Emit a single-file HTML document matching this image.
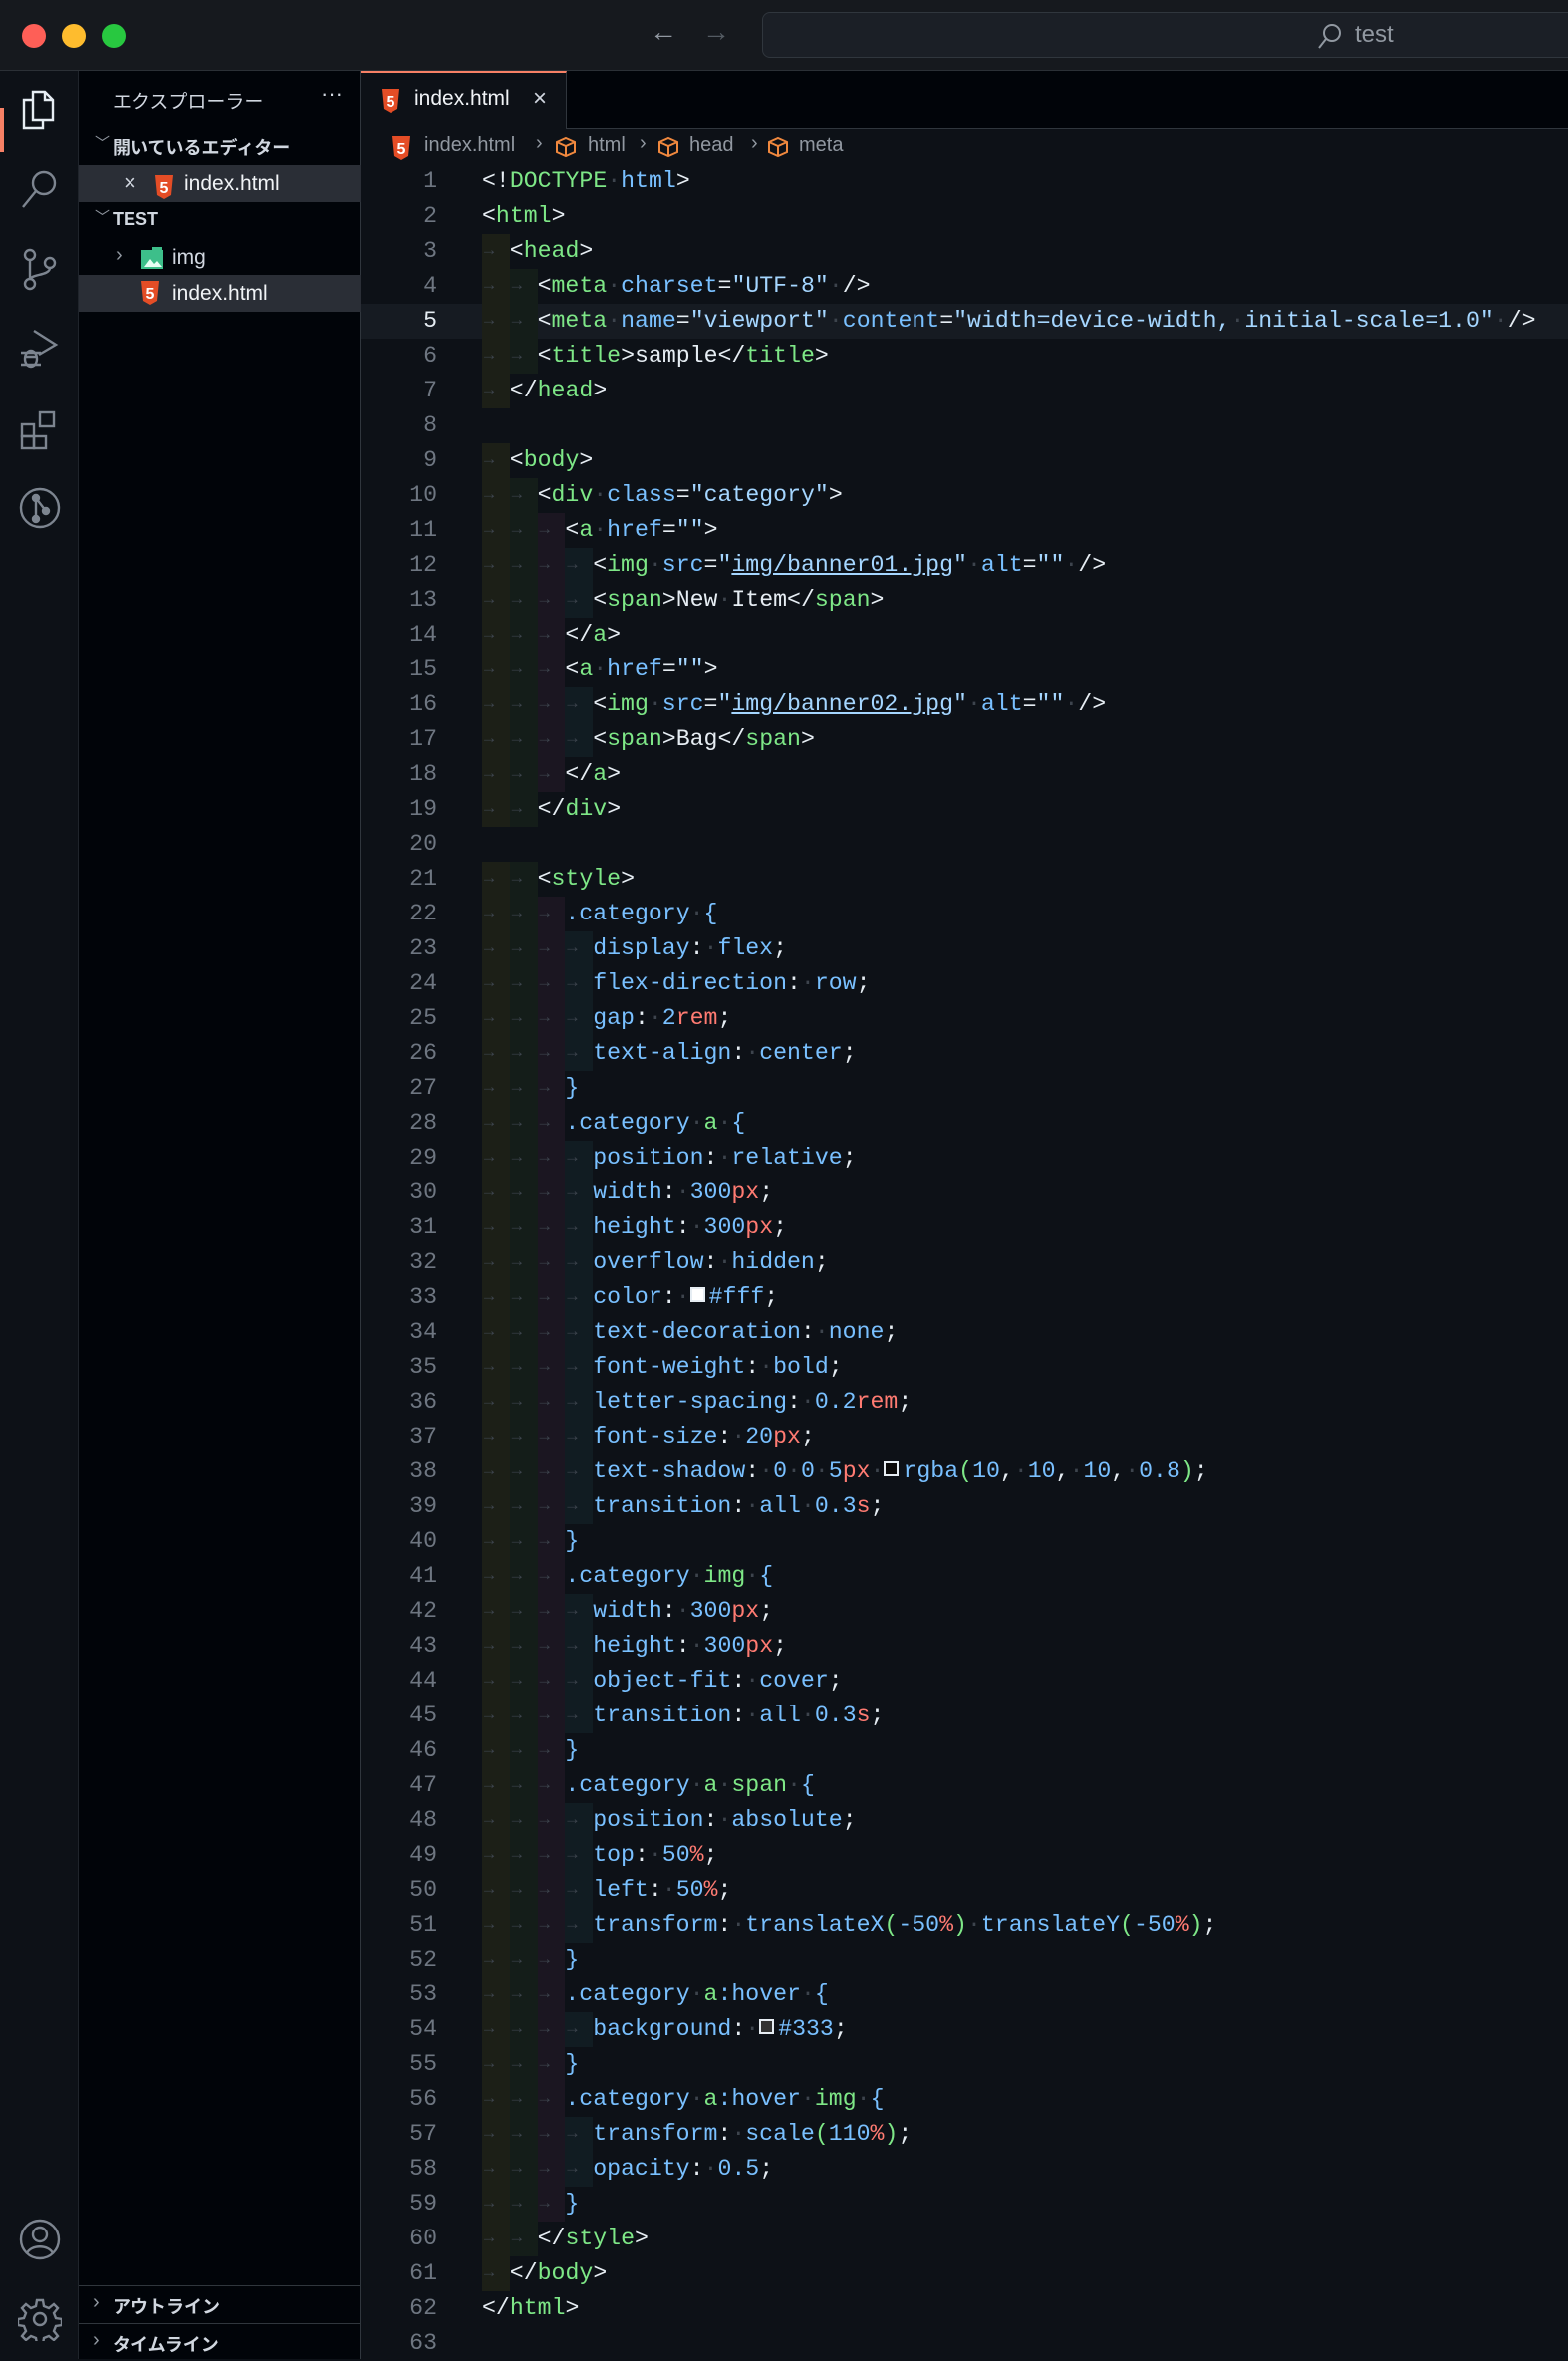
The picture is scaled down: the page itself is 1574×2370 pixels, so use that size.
<!DOCTYPE html>
<html><head><meta charset="utf-8">
<style>
*{margin:0;padding:0;box-sizing:border-box}
body{width:1574px;height:2368px;background:#0d1117;overflow:hidden;position:relative;font-family:"Liberation Sans","Noto Sans CJK JP",sans-serif;color:#e6edf3}
.abs{position:absolute}
#title{left:0;top:0;width:1574px;height:71px;background:#16191e;border-bottom:1px solid #2b3036}
.dot{position:absolute;top:24px;width:24px;height:24px;border-radius:50%}
#search{left:765px;top:12px;width:830px;height:46px;border:1px solid #30363d;border-radius:8px;background:#1b1f26}
#act{left:0;top:71px;width:79px;height:2297px;background:#0d1117;border-right:1px solid #1f242b}
#side{left:79px;top:71px;width:283px;height:2297px;background:#010409;border-right:1px solid #30363d;font-size:20px;color:#d1d7e0}
#tabbar{left:362px;top:71px;width:1212px;height:58px;background:#010409;border-bottom:1px solid #30363d}
#tab{left:362px;top:71px;width:207px;height:58px;background:#0d1117;border-top:2px solid #f78166;border-right:1px solid #30363d}
#crumb{left:362px;top:130px;height:35px;font-size:20px;color:#9198a1}
#code{left:362px;top:165px;font-family:"Liberation Mono",monospace;font-size:23.2px;line-height:35px}
.r{height:35px;display:flex;white-space:pre;overflow:hidden}
.n{width:77px;text-align:right;color:#6e7681;margin-right:45px;flex:none}
.hl{background:#161b22;width:1212px}
.hl .n{color:#e6edf3}
g{color:#7ee787}c{color:#79c0ff}v{color:#a5d6ff}r{color:#ff7b72}
d{color:#3d444d}
k{color:#a5d6ff;text-decoration:underline}
i1,i2,i3,i4{display:inline-block;width:27.8px;height:35px;vertical-align:top;color:#3d444d;font-style:normal;font-size:17px;text-indent:2px}
i1{background:#1c1f17}i2{background:#141d19}i3{background:#1b1621}i4{background:#111c22}
.sw{display:inline-block;width:15px;height:15px;border:2px solid #e6edf3;margin-right:4px;vertical-align:1px}
.row{position:absolute;left:0;width:283px;height:37px}
.t{position:absolute;white-space:nowrap}
</style></head><body>
<div id="title" class="abs">
<div class="dot" style="left:22px;background:#fe5f57"></div>
<div class="dot" style="left:62px;background:#febc2e"></div>
<div class="dot" style="left:102px;background:#28c840"></div>
<div class="t" style="left:652px;top:16px;font-size:28px;color:#9198a1">←</div>
<div class="t" style="left:705px;top:16px;font-size:28px;color:#545b63">→</div>
</div>
<div id="search" class="abs">
<svg class="abs" style="left:555px;top:8px" width="28" height="30" viewBox="0 0 28 30"><circle cx="16" cy="12" r="8" fill="none" stroke="#9198a1" stroke-width="2"/><line x1="10" y1="18" x2="3" y2="27" stroke="#9198a1" stroke-width="2"/></svg>
<div class="t" style="left:594px;top:8px;font-size:24px;color:#9198a1">test</div>
</div>

<div id="act" class="abs">
<div class="abs" style="left:0;top:37px;width:4px;height:45px;background:#f78166"></div>
<svg class="abs" style="left:18px;top:15px" width="44" height="50" fill="none" stroke-width="2.4">
<g stroke="#e6edf3"><path d="M15 6h12l8 8v20H15z M27 6v8h8"/><path d="M15 14H6v28h19v-8"/></g>
</svg>
<svg class="abs" style="left:18px;top:97px" width="44" height="44" fill="none" stroke="#7d8590" stroke-width="2.4"><circle cx="26" cy="16" r="11"/><line x1="18" y1="24" x2="5" y2="40"/></svg>
<svg class="abs" style="left:18px;top:177px" width="44" height="44" fill="none" stroke="#7d8590" stroke-width="2.4"><circle cx="12" cy="8" r="5"/><circle cx="12" cy="37" r="5"/><circle cx="32" cy="16" r="5"/><path d="M12 13v19M32 21c0 8-20 6-20 12"/></svg>
<svg class="abs" style="left:18px;top:257px" width="44" height="44" fill="none" stroke="#7d8590" stroke-width="2.4"><path d="M16 4l22 14-17 10"/><ellipse cx="13" cy="32" rx="6" ry="8"/><path d="M3 26h20M3 38h20M7 30h12"/></svg>
<svg class="abs" style="left:18px;top:339px" width="44" height="44" fill="none" stroke="#7d8590" stroke-width="2.4"><rect x="4" y="16" width="12" height="12"/><rect x="4" y="28" width="12" height="12"/><rect x="16" y="28" width="12" height="12"/><rect x="22" y="4" width="14" height="14"/></svg>
<svg class="abs" style="left:18px;top:417px" width="44" height="44" fill="none" stroke="#7d8590" stroke-width="2.4"><circle cx="22" cy="22" r="19"/><circle cx="18" cy="12" r="3" fill="#7d8590"/><circle cx="18" cy="33" r="3" fill="#7d8590"/><circle cx="28" cy="25" r="3" fill="#7d8590"/><path d="M18 12v21M18 12l10 13"/></svg>
<svg class="abs" style="left:18px;top:2155px" width="44" height="44" fill="none" stroke="#7d8590" stroke-width="2.4"><circle cx="22" cy="22" r="19"/><circle cx="22" cy="17" r="7"/><path d="M9 36c4-9 22-9 26 0"/></svg>
<svg class="abs" style="left:18px;top:2235px" width="44" height="44" fill="none" stroke="#7d8590" stroke-width="2.4"><circle cx="22" cy="22" r="6"/><path d="M19 3h6l1 6 5 2 5-4 4 4-4 5 2 5 6 1v6l-6 1-2 5 4 5-4 4-5-4-5 2-1 6h-6l-1-6-5-2-5 4-4-4 4-5-2-5-6-1v-6l6-1 2-5-4-5 4-4 5 4 5-2z"/></svg>
</div>

<div id="side" class="abs">
<div class="t" style="left:34px;top:16px;font-size:19px;color:#d1d7e0">エクスプローラー</div>
<div class="t" style="left:243px;top:10px;font-size:22px;color:#d1d7e0">···</div>
<div class="t" style="left:16px;top:62px;font-size:15px;color:#9198a1">﹀</div>
<div class="t" style="left:34px;top:64px;font-size:18px;font-weight:bold">開いているエディター</div>
<div class="row" style="top:95px;background:#2a2e36"></div>
<div class="t" style="left:45px;top:100px;font-size:22px;color:#d1d7e0">×</div>
<svg class="abs" style="left:76px;top:104px" width="20" height="26" viewBox="0 0 20 26"><path d="M1 1h18l-2 20-7 4-7-4z" fill="#e44d26"/><text x="10" y="19" font-size="16" font-weight="bold" text-anchor="middle" fill="#fff" font-family="Liberation Sans">5</text></svg>
<div class="t" style="left:106px;top:102px;font-size:21px;color:#f0f3f6">index.html</div>
<div class="t" style="left:16px;top:136px;font-size:15px;color:#9198a1">﹀</div>
<div class="t" style="left:34px;top:139px;font-size:18px;font-weight:bold">TEST</div>
<div class="t" style="left:37px;top:174px;font-size:20px;color:#9198a1">›</div>
<svg class="abs" style="left:62px;top:176px" width="24" height="24"><rect x="1" y="4" width="22" height="19" fill="#3dbf8a"/><rect x="12" y="1" width="10" height="5" fill="#3dbf8a"/><path d="M4 21l6-8 4 5 3-3 5 6z" fill="#e6fff3"/></svg>
<div class="t" style="left:94px;top:176px;font-size:21px">img</div>
<div class="row" style="top:205px;background:#2a2e36"></div>
<svg class="abs" style="left:62px;top:210px" width="20" height="26" viewBox="0 0 20 26"><path d="M1 1h18l-2 20-7 4-7-4z" fill="#e44d26"/><text x="10" y="19" font-size="16" font-weight="bold" text-anchor="middle" fill="#fff" font-family="Liberation Sans">5</text></svg>
<div class="t" style="left:94px;top:212px;font-size:21px;color:#f0f3f6">index.html</div>
<div class="abs" style="left:0;top:2223px;width:283px;height:1px;background:#30363d"></div>
<div class="t" style="left:14px;top:2229px;font-size:20px;color:#9198a1">›</div>
<div class="t" style="left:34px;top:2231px;font-size:18px;font-weight:bold">アウトライン</div>
<div class="abs" style="left:0;top:2261px;width:283px;height:1px;background:#30363d"></div>
<div class="t" style="left:14px;top:2267px;font-size:20px;color:#9198a1">›</div>
<div class="t" style="left:34px;top:2269px;font-size:18px;font-weight:bold">タイムライン</div>
</div>

<div id="tabbar" class="abs"></div>
<div id="tab" class="abs">
<svg class="abs" style="left:20px;top:15px" width="20" height="26" viewBox="0 0 20 26"><path d="M1 1h18l-2 20-7 4-7-4z" fill="#e44d26"/><text x="10" y="19" font-size="16" font-weight="bold" text-anchor="middle" fill="#fff" font-family="Liberation Sans">5</text></svg>
<div class="t" style="left:54px;top:14px;font-size:21px;color:#f0f3f6">index.html</div>
<div class="t" style="left:173px;top:12px;font-size:24px;color:#d1d7e0">×</div>
</div>
<div id="crumb" class="abs">
<svg class="abs" style="left:31px;top:6px" width="20" height="26" viewBox="0 0 20 26"><path d="M1 1h18l-2 20-7 4-7-4z" fill="#e44d26"/><text x="10" y="19" font-size="16" font-weight="bold" text-anchor="middle" fill="#fff" font-family="Liberation Sans">5</text></svg>
<div class="t" style="left:64px;top:5px">index.html</div>
<div class="t" style="left:176px;top:3px">›</div>
<svg class="abs" style="left:195px;top:7px" width="22" height="22" fill="none" stroke="#f0883e" stroke-width="2"><path d="M11 2l9 4v10l-9 4-9-4V6zM2 6l9 4 9-4M11 10v10"/></svg>
<div class="t" style="left:228px;top:5px">html</div>
<div class="t" style="left:280px;top:3px">›</div>
<svg class="abs" style="left:298px;top:7px" width="22" height="22" fill="none" stroke="#f0883e" stroke-width="2"><path d="M11 2l9 4v10l-9 4-9-4V6zM2 6l9 4 9-4M11 10v10"/></svg>
<div class="t" style="left:330px;top:5px">head</div>
<div class="t" style="left:392px;top:3px">›</div>
<svg class="abs" style="left:408px;top:7px" width="22" height="22" fill="none" stroke="#f0883e" stroke-width="2"><path d="M11 2l9 4v10l-9 4-9-4V6zM2 6l9 4 9-4M11 10v10"/></svg>
<div class="t" style="left:440px;top:5px">meta</div>
</div>

<div id="code" class="abs"><div class="r"><span class="n">1</span><span>&lt;!<g>DOCTYPE</g><d>·</d><c>html</c>&gt;</span></div><div class="r"><span class="n">2</span><span>&lt;<g>html</g>&gt;</span></div><div class="r"><span class="n">3</span><span><i1>→</i1>&lt;<g>head</g>&gt;</span></div><div class="r"><span class="n">4</span><span><i1>→</i1><i2>→</i2>&lt;<g>meta</g><d>·</d><c>charset</c>=<v>"UTF-8"</v><d>·</d>/&gt;</span></div><div class="r hl"><span class="n">5</span><span><i1>→</i1><i2>→</i2>&lt;<g>meta</g><d>·</d><c>name</c>=<v>"viewport"</v><d>·</d><c>content</c>=<v>"width=device-width,<d>·</d>initial-scale=1.0"</v><d>·</d>/&gt;</span></div><div class="r"><span class="n">6</span><span><i1>→</i1><i2>→</i2>&lt;<g>title</g>&gt;sample&lt;/<g>title</g>&gt;</span></div><div class="r"><span class="n">7</span><span><i1>→</i1>&lt;/<g>head</g>&gt;</span></div><div class="r"><span class="n">8</span><span></span></div><div class="r"><span class="n">9</span><span><i1>→</i1>&lt;<g>body</g>&gt;</span></div><div class="r"><span class="n">10</span><span><i1>→</i1><i2>→</i2>&lt;<g>div</g><d>·</d><c>class</c>=<v>"category"</v>&gt;</span></div><div class="r"><span class="n">11</span><span><i1>→</i1><i2>→</i2><i3>→</i3>&lt;<g>a</g><d>·</d><c>href</c>=<v>""</v>&gt;</span></div><div class="r"><span class="n">12</span><span><i1>→</i1><i2>→</i2><i3>→</i3><i4>→</i4>&lt;<g>img</g><d>·</d><c>src</c>=<v>"<k>img/banner01.jpg</k>"</v><d>·</d><c>alt</c>=<v>""</v><d>·</d>/&gt;</span></div><div class="r"><span class="n">13</span><span><i1>→</i1><i2>→</i2><i3>→</i3><i4>→</i4>&lt;<g>span</g>&gt;New<d>·</d>Item&lt;/<g>span</g>&gt;</span></div><div class="r"><span class="n">14</span><span><i1>→</i1><i2>→</i2><i3>→</i3>&lt;/<g>a</g>&gt;</span></div><div class="r"><span class="n">15</span><span><i1>→</i1><i2>→</i2><i3>→</i3>&lt;<g>a</g><d>·</d><c>href</c>=<v>""</v>&gt;</span></div><div class="r"><span class="n">16</span><span><i1>→</i1><i2>→</i2><i3>→</i3><i4>→</i4>&lt;<g>img</g><d>·</d><c>src</c>=<v>"<k>img/banner02.jpg</k>"</v><d>·</d><c>alt</c>=<v>""</v><d>·</d>/&gt;</span></div><div class="r"><span class="n">17</span><span><i1>→</i1><i2>→</i2><i3>→</i3><i4>→</i4>&lt;<g>span</g>&gt;Bag&lt;/<g>span</g>&gt;</span></div><div class="r"><span class="n">18</span><span><i1>→</i1><i2>→</i2><i3>→</i3>&lt;/<g>a</g>&gt;</span></div><div class="r"><span class="n">19</span><span><i1>→</i1><i2>→</i2>&lt;/<g>div</g>&gt;</span></div><div class="r"><span class="n">20</span><span></span></div><div class="r"><span class="n">21</span><span><i1>→</i1><i2>→</i2>&lt;<g>style</g>&gt;</span></div><div class="r"><span class="n">22</span><span><i1>→</i1><i2>→</i2><i3>→</i3><c>.category</c><d>·</d><c>{</c></span></div><div class="r"><span class="n">23</span><span><i1>→</i1><i2>→</i2><i3>→</i3><i4>→</i4><c>display</c>:<d>·</d><c>flex</c>;</span></div><div class="r"><span class="n">24</span><span><i1>→</i1><i2>→</i2><i3>→</i3><i4>→</i4><c>flex-direction</c>:<d>·</d><c>row</c>;</span></div><div class="r"><span class="n">25</span><span><i1>→</i1><i2>→</i2><i3>→</i3><i4>→</i4><c>gap</c>:<d>·</d><c>2</c><r>rem</r>;</span></div><div class="r"><span class="n">26</span><span><i1>→</i1><i2>→</i2><i3>→</i3><i4>→</i4><c>text-align</c>:<d>·</d><c>center</c>;</span></div><div class="r"><span class="n">27</span><span><i1>→</i1><i2>→</i2><i3>→</i3><c>}</c></span></div><div class="r"><span class="n">28</span><span><i1>→</i1><i2>→</i2><i3>→</i3><c>.category</c><d>·</d><g>a</g><d>·</d><c>{</c></span></div><div class="r"><span class="n">29</span><span><i1>→</i1><i2>→</i2><i3>→</i3><i4>→</i4><c>position</c>:<d>·</d><c>relative</c>;</span></div><div class="r"><span class="n">30</span><span><i1>→</i1><i2>→</i2><i3>→</i3><i4>→</i4><c>width</c>:<d>·</d><c>300</c><r>px</r>;</span></div><div class="r"><span class="n">31</span><span><i1>→</i1><i2>→</i2><i3>→</i3><i4>→</i4><c>height</c>:<d>·</d><c>300</c><r>px</r>;</span></div><div class="r"><span class="n">32</span><span><i1>→</i1><i2>→</i2><i3>→</i3><i4>→</i4><c>overflow</c>:<d>·</d><c>hidden</c>;</span></div><div class="r"><span class="n">33</span><span><i1>→</i1><i2>→</i2><i3>→</i3><i4>→</i4><c>color</c>:<d>·</d><span class="sw" style="background:#fff"></span><c>#fff</c>;</span></div><div class="r"><span class="n">34</span><span><i1>→</i1><i2>→</i2><i3>→</i3><i4>→</i4><c>text-decoration</c>:<d>·</d><c>none</c>;</span></div><div class="r"><span class="n">35</span><span><i1>→</i1><i2>→</i2><i3>→</i3><i4>→</i4><c>font-weight</c>:<d>·</d><c>bold</c>;</span></div><div class="r"><span class="n">36</span><span><i1>→</i1><i2>→</i2><i3>→</i3><i4>→</i4><c>letter-spacing</c>:<d>·</d><c>0.2</c><r>rem</r>;</span></div><div class="r"><span class="n">37</span><span><i1>→</i1><i2>→</i2><i3>→</i3><i4>→</i4><c>font-size</c>:<d>·</d><c>20</c><r>px</r>;</span></div><div class="r"><span class="n">38</span><span><i1>→</i1><i2>→</i2><i3>→</i3><i4>→</i4><c>text-shadow</c>:<d>·</d><c>0</c><d>·</d><c>0</c><d>·</d><c>5</c><r>px</r><d>·</d><span class="sw" style="background:#0a0a0a"></span><c>rgba</c><g>(</g><c>10</c>,<d>·</d><c>10</c>,<d>·</d><c>10</c>,<d>·</d><c>0.8</c><g>)</g>;</span></div><div class="r"><span class="n">39</span><span><i1>→</i1><i2>→</i2><i3>→</i3><i4>→</i4><c>transition</c>:<d>·</d><c>all</c><d>·</d><c>0.3</c><r>s</r>;</span></div><div class="r"><span class="n">40</span><span><i1>→</i1><i2>→</i2><i3>→</i3><c>}</c></span></div><div class="r"><span class="n">41</span><span><i1>→</i1><i2>→</i2><i3>→</i3><c>.category</c><d>·</d><g>img</g><d>·</d><c>{</c></span></div><div class="r"><span class="n">42</span><span><i1>→</i1><i2>→</i2><i3>→</i3><i4>→</i4><c>width</c>:<d>·</d><c>300</c><r>px</r>;</span></div><div class="r"><span class="n">43</span><span><i1>→</i1><i2>→</i2><i3>→</i3><i4>→</i4><c>height</c>:<d>·</d><c>300</c><r>px</r>;</span></div><div class="r"><span class="n">44</span><span><i1>→</i1><i2>→</i2><i3>→</i3><i4>→</i4><c>object-fit</c>:<d>·</d><c>cover</c>;</span></div><div class="r"><span class="n">45</span><span><i1>→</i1><i2>→</i2><i3>→</i3><i4>→</i4><c>transition</c>:<d>·</d><c>all</c><d>·</d><c>0.3</c><r>s</r>;</span></div><div class="r"><span class="n">46</span><span><i1>→</i1><i2>→</i2><i3>→</i3><c>}</c></span></div><div class="r"><span class="n">47</span><span><i1>→</i1><i2>→</i2><i3>→</i3><c>.category</c><d>·</d><g>a</g><d>·</d><g>span</g><d>·</d><c>{</c></span></div><div class="r"><span class="n">48</span><span><i1>→</i1><i2>→</i2><i3>→</i3><i4>→</i4><c>position</c>:<d>·</d><c>absolute</c>;</span></div><div class="r"><span class="n">49</span><span><i1>→</i1><i2>→</i2><i3>→</i3><i4>→</i4><c>top</c>:<d>·</d><c>50</c><r>%</r>;</span></div><div class="r"><span class="n">50</span><span><i1>→</i1><i2>→</i2><i3>→</i3><i4>→</i4><c>left</c>:<d>·</d><c>50</c><r>%</r>;</span></div><div class="r"><span class="n">51</span><span><i1>→</i1><i2>→</i2><i3>→</i3><i4>→</i4><c>transform</c>:<d>·</d><c>translateX</c><g>(</g><c>-50</c><r>%</r><g>)</g><d>·</d><c>translateY</c><g>(</g><c>-50</c><r>%</r><g>)</g>;</span></div><div class="r"><span class="n">52</span><span><i1>→</i1><i2>→</i2><i3>→</i3><c>}</c></span></div><div class="r"><span class="n">53</span><span><i1>→</i1><i2>→</i2><i3>→</i3><c>.category</c><d>·</d><g>a</g><c>:hover</c><d>·</d><c>{</c></span></div><div class="r"><span class="n">54</span><span><i1>→</i1><i2>→</i2><i3>→</i3><i4>→</i4><c>background</c>:<d>·</d><span class="sw" style="background:#333"></span><c>#333</c>;</span></div><div class="r"><span class="n">55</span><span><i1>→</i1><i2>→</i2><i3>→</i3><c>}</c></span></div><div class="r"><span class="n">56</span><span><i1>→</i1><i2>→</i2><i3>→</i3><c>.category</c><d>·</d><g>a</g><c>:hover</c><d>·</d><g>img</g><d>·</d><c>{</c></span></div><div class="r"><span class="n">57</span><span><i1>→</i1><i2>→</i2><i3>→</i3><i4>→</i4><c>transform</c>:<d>·</d><c>scale</c><g>(</g><c>110</c><r>%</r><g>)</g>;</span></div><div class="r"><span class="n">58</span><span><i1>→</i1><i2>→</i2><i3>→</i3><i4>→</i4><c>opacity</c>:<d>·</d><c>0.5</c>;</span></div><div class="r"><span class="n">59</span><span><i1>→</i1><i2>→</i2><i3>→</i3><c>}</c></span></div><div class="r"><span class="n">60</span><span><i1>→</i1><i2>→</i2>&lt;/<g>style</g>&gt;</span></div><div class="r"><span class="n">61</span><span><i1>→</i1>&lt;/<g>body</g>&gt;</span></div><div class="r"><span class="n">62</span><span>&lt;/<g>html</g>&gt;</span></div><div class="r"><span class="n">63</span><span></span></div></div>
</body></html>
